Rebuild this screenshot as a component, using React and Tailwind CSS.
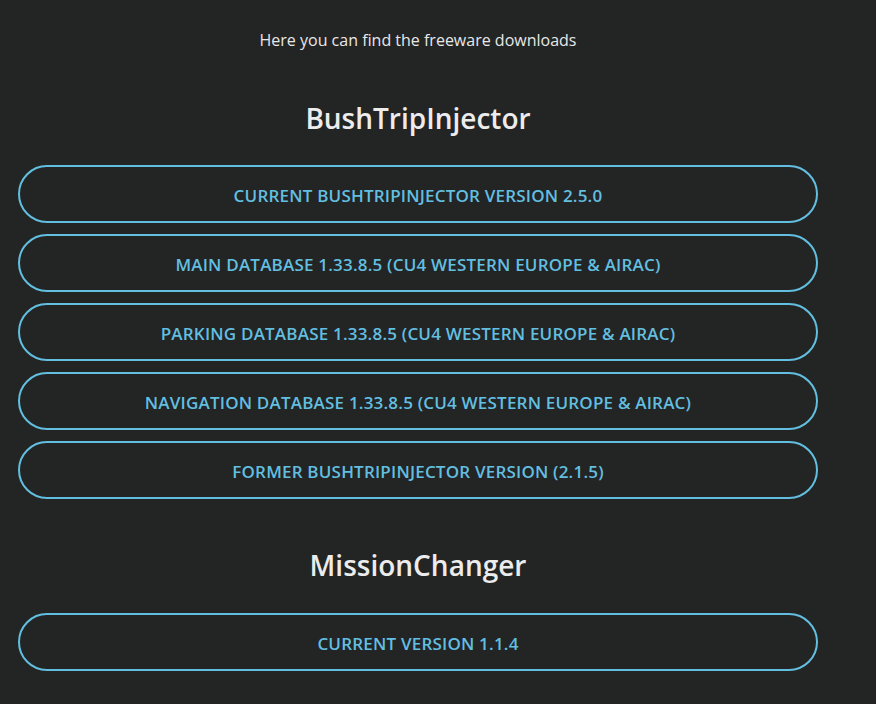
export default function App() {
  const bush = [
    "CURRENT BUSHTRIPINJECTOR VERSION 2.5.0",
    "MAIN DATABASE 1.33.8.5 (CU4 WESTERN EUROPE & AIRAC)",
    "PARKING DATABASE 1.33.8.5 (CU4 WESTERN EUROPE & AIRAC)",
    "NAVIGATION DATABASE 1.33.8.5 (CU4 WESTERN EUROPE & AIRAC)",
    "FORMER BUSHTRIPINJECTOR VERSION (2.1.5)",
  ];
  const Btn = ({ t }) => (
    <a className="flex h-[58px] w-full items-center justify-center rounded-full border-2 border-[#62bfe0] pt-[3px] text-[17px] font-semibold tracking-[0.2px] text-[#62bfe0]">
      {t}
    </a>
  );
  return (
    <div className="min-h-[704px] w-full bg-[#232424] font-['Open_Sans',sans-serif]">
      <div className="ml-[18px] flex w-[800px] flex-col items-center pt-[28px]">
        <p className="text-[16px] leading-[24px] text-[#e8e8e8]">Here you can find the freeware downloads</p>
        <h2 className="mt-[46px] text-[28px] font-semibold leading-[40px] text-[#ececec]">BushTripInjector</h2>
        <div className="mt-[27px] flex w-full flex-col gap-[11px]">
          {bush.map((t) => (
            <Btn key={t} t={t} />
          ))}
        </div>
        <h2 className="mt-[46px] text-[28px] font-semibold leading-[40px] text-[#ececec]">MissionChanger</h2>
        <div className="mt-[28px] flex w-full flex-col">
          <Btn t="CURRENT VERSION 1.1.4" />
        </div>
      </div>
    </div>
  );
}
